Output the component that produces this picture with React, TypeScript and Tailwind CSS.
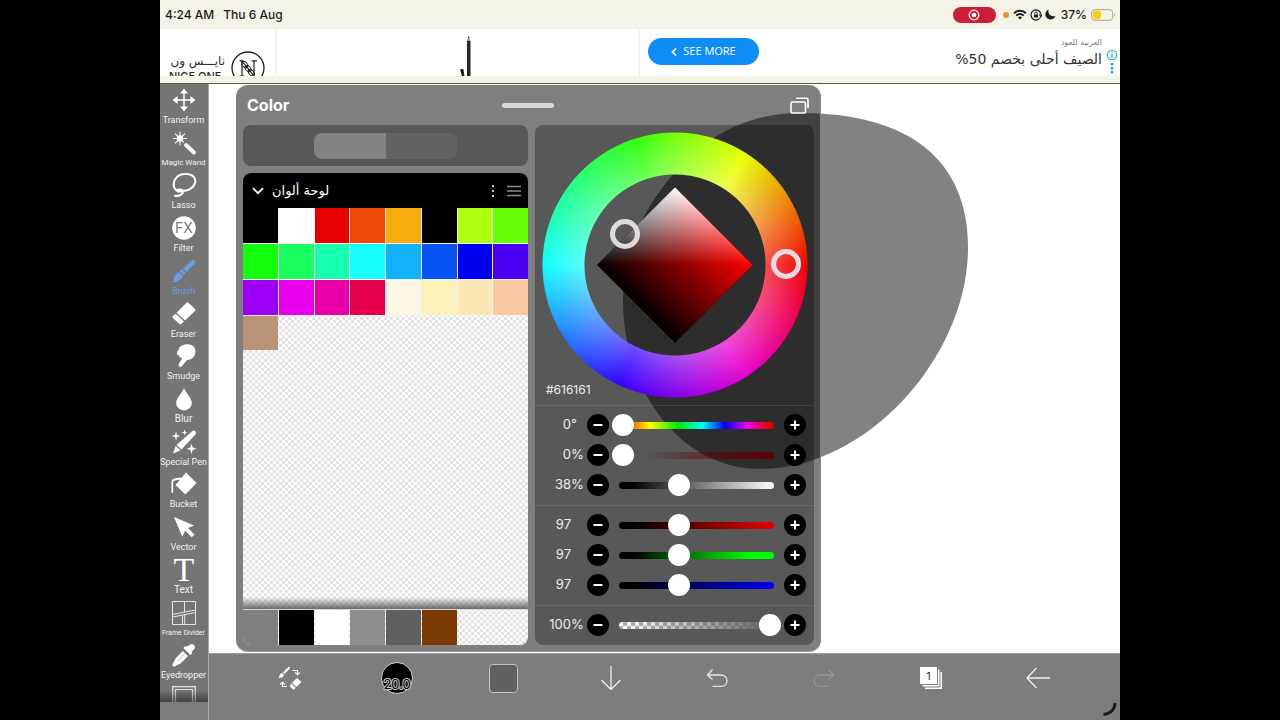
import { useState, type ReactNode } from 'react';

type Tool = { name: string; size: string; icon: ReactNode };

const CHECKER = 'bg-[repeating-conic-gradient(#e2e2e2_0_25%,#ffffff_0_50%)] bg-[length:6px_6px]';

const tools: Tool[] = [
  {
    name: 'Transform',
    size: 'text-[9px]',
    icon: (
      <g fill="white">
        <path d="M12 4v16M4 12h16" stroke="white" strokeWidth="1.5" />
        <path d="M12 .5l4 5H8zM12 23.500l4-5H8zM.5 12l5-4v8zM23.500 12l-5-4v8z" />
      </g>
    ),
  },
  {
    name: 'Magic Wand',
    size: 'text-[8px]',
    icon: (
      <g stroke="white" strokeLinecap="round">
        <path d="M14 14l8 7.500" strokeWidth="3.800" />
        <path
          d="M8 1v4M8 10v4M1.500 7.500h4M10.500 7.500h4M3.300 2.800l2.700 2.700M12.700 2.800L10 5.500M3.300 12.200L6 9.500M10 9.500l1.500 1.500"
          strokeWidth="1.100"
        />
        <circle cx="8" cy="7.500" r="2.800" fill="white" />
      </g>
    ),
  },
  {
    name: 'Lasso',
    size: 'text-[9px]',
    icon: (
      <g fill="none" stroke="white" strokeWidth="2" strokeLinecap="round">
        <path d="M4 17C1 14 .5 8.500 4.500 4.500c4-4.300 13-4.500 17-.9 3.500 3.800 1.500 10-4 12.700-3 1.400-6 1.700-8.500 1.200" />
        <path d="M9 17.500c2 .5 3 3-.5 4.500-2 .9-4 1-5.500.8" />
        <ellipse cx="7.500" cy="17.500" rx="3.600" ry="2" fill="white" stroke="none" />
      </g>
    ),
  },
  {
    name: 'Filter',
    size: 'text-[9px]',
    icon: (
      <g>
        <circle cx="12" cy="12" r="11.800" fill="white" />
        <text x="12" y="17" textAnchor="middle" fontSize="14" fill="#777777" className="font-['Inter',sans-serif]">
          FX
        </text>
      </g>
    ),
  },
  {
    name: 'Brush',
    size: 'text-[9px]',
    icon: (
      <g fill="#6b9ce8">
        <path d="M20 1.500c1.500-1.300 4.300 1 3 2.900L14.500 13 10.800 9.500z" />
        <path d="M9.800 10.300l3.900 3.700-2.200 2.300-4-3.700z" />
        <path d="M6.700 13.300l4 3.800c-.5 3-5.200 6-10.200 6.400 1.200-1 1.300-2.700 1.700-5 .5-2.800 2.200-4.800 4.500-5.200z" />
      </g>
    ),
  },
  {
    name: 'Eraser',
    size: 'text-[9px]',
    icon: (
      <g fill="white">
        <path d="M14.500 .8c.7-.7 1.300-.7 2 0l6.500 6.100c.7.7.7 1.300 0 2L13 18.500 4.600 10.700z" />
        <path d="M3.700 11.700l8.300 7.800-2.600 2.500c-.7.600-1.300.6-2 0L.9 15.900c-.7-.7-.7-1.300 0-2z" />
      </g>
    ),
  },
  {
    name: 'Smudge',
    size: 'text-[9px]',
    icon: (
      <path
        d="M6.500 6C7 2.500 11 .3 15.500.3c5 0 8 3.200 8 7 0 5-3.500 8.700-8.500 8.700l-4.800 6c-1.700 2-4.700.4-3.300-2.200l3.600-6c-1.500.5-3.300-.3-3.400-2.300-1.600-.2-2.400-1.700-2-3 .1-1.200.7-2 1.400-2.500z"
        fill="white"
      />
    ),
  },
  {
    name: 'Blur',
    size: 'text-[10px]',
    icon: <path d="M12 1c2.500 6 7.800 10 7.800 15.200a7.800 7.300 0 01-15.600 0C4.200 11 9.500 7 12 1z" fill="white" />,
  },
  {
    name: 'Special Pen',
    size: 'text-[9px]',
    icon: (
      <g fill="white">
        <path d="M20.500 1c1.700-1.500 4.600 1.300 3.100 3.300L9.500 19.500l-5-4.500zM3.700 16l4.800 4.300L1 23.500z" />
        <path d="M4 1.500l1 3.600 3.500 1-3.500 1-1 3.600-1-3.600-3.500-1 3.500-1zM12.500-.5l.7 2.300 2.300.7-2.300.7-.7 2.300-.7-2.300L9.500 2.500l2.300-.7zM19.500 13.500l1.200 4 3.800 1.200-3.800 1.200-1.200 4-1.200-4-3.800-1.200 3.800-1.200z" />
      </g>
    ),
  },
  {
    name: 'Bucket',
    size: 'text-[9px]',
    icon: (
      <g>
        <path d="M14 .5L24.500 11 13.500 22.500 3.500 13z" fill="white" />
        <path d="M11 6.500C6 7 .5 6.500 .3 9.500V20" fill="none" stroke="white" strokeWidth="1.800" strokeLinecap="round" />
      </g>
    ),
  },
  {
    name: 'Vector',
    size: 'text-[9px]',
    icon: <path d="M2 2l20 8.500-6 2.500 6.500 6.800-2.800 2.500-6.500-6.500-3 5.700z" fill="white" />,
  },
  {
    name: 'Text',
    size: 'text-[10px]',
    icon: (
      <text x="12" y="23" textAnchor="middle" fontSize="34" fill="white" className="font-['Liberation_Serif',serif]">
        T
      </text>
    ),
  },
  {
    name: 'Frame Divider',
    size: 'text-[7px]',
    icon: (
      <g fill="none" stroke="#e6e6e6" strokeWidth="1">
        <path d="M.5.5h23v23H.5zM.5 13.500l23-4.500M.5 16l23-4.500M12.500.5v10.600M10.500 14v9.500M12.700 13.600v9.900" />
      </g>
    ),
  },
  {
    name: 'Eyedropper',
    size: 'text-[9px]',
    icon: (
      <g>
        <path
          d="M18 1.700c2.500-2.300 6.500 1.400 4.300 4.300l-2.800 3 .9.900-2.100 2.100-7-7 2.100-2.100.9.900z"
          fill="white"
        />
        <path d="M10.800 8L3.500 15.500.5 21.500c-.3 1.300.7 2.200 2 2l6-3L16 13z" fill="white" />
        <path d="M13 10.500l-7.500 7.500" stroke="#b5b5b5" strokeWidth="1" />
      </g>
    ),
  },
];

const swatches = [
  ['Black', 'bg-black'],
  ['White', 'bg-white'],
  ['Red', 'bg-[#e80000]'],
  ['Vermilion', 'bg-[#ee4b08]'],
  ['Orange', 'bg-[#f6ac0b]'],
  ['Black', 'bg-black'],
  ['Lime', 'bg-[#aeff10]'],
  ['Chartreuse', 'bg-[#66ff08]'],
  ['Green', 'bg-[#14ff0c]'],
  ['Emerald', 'bg-[#19ff5b]'],
  ['Spring', 'bg-[#17ffae]'],
  ['Cyan', 'bg-[#18ffff]'],
  ['Sky', 'bg-[#12b2fb]'],
  ['Azure', 'bg-[#0853f4]'],
  ['Blue', 'bg-[#0000f0]'],
  ['Indigo', 'bg-[#4a00ee]'],
  ['Violet', 'bg-[#9b00f5]'],
  ['Magenta', 'bg-[#ea00ef]'],
  ['Fuchsia', 'bg-[#e800a6]'],
  ['Crimson', 'bg-[#e8004e]'],
  ['Ivory', 'bg-[#fdf6e3]'],
  ['Cream', 'bg-[#fbf1b9]'],
  ['Wheat', 'bg-[#fce6b4]'],
  ['Peach', 'bg-[#f9c7a1]'],
];

const recent = [
  ['Grey', 'bg-[#7f7f7f]'],
  ['Black', 'bg-black'],
  ['White', 'bg-white'],
  ['Silver', 'bg-[#8e8e8e]'],
  ['Dark grey', 'bg-[#606060]'],
  ['Brown', 'bg-[#7b3a02]'],
];

type Channel = { label: string; unit: string; value: number; max: number; track: string };

const groups: Channel[][] = [
  [
    {
      label: 'Hue',
      unit: '°',
      value: 0,
      max: 360,
      track: 'bg-[linear-gradient(to_right,#e00000,#ffff00_20%,#00e800_38%,#00ffff_54%,#0000f0_68%,#f000f0_83%,#e00000_97%)]',
    },
    { label: 'Saturation', unit: '%', value: 0, max: 100, track: 'bg-[linear-gradient(to_right,#61616100_15%,#600008)]' },
    { label: 'Brightness', unit: '%', value: 38, max: 100, track: 'bg-[linear-gradient(to_right,#000000_8%,#ffffff)]' },
  ],
  [
    { label: 'Red', unit: '', value: 97, max: 255, track: 'bg-[linear-gradient(to_right,#000000_8%,#e80000)]' },
    { label: 'Green', unit: '', value: 97, max: 255, track: 'bg-[linear-gradient(to_right,#000000_8%,#00ff00_85%)]' },
    { label: 'Blue', unit: '', value: 97, max: 255, track: 'bg-[linear-gradient(to_right,#000000_8%,#0000f0)]' },
  ],
  [
    {
      label: 'Opacity',
      unit: '%',
      value: 100,
      max: 100,
      track:
        'bg-[linear-gradient(to_right,#61616100,#616161),repeating-conic-gradient(#b4b4b4_0_25%,#ffffff_0_50%)] bg-[length:100%_100%,8px_8px]',
    },
  ],
];

function Slider({ channel }: { channel: Channel }) {
  const [value, setValue] = useState(channel.value);
  const round = 'flex size-[22px] shrink-0 items-center justify-center rounded-full bg-black text-white';
  return (
    <div className="flex h-[30px] items-center pr-2 text-[13px] text-[#ececec]">
      <span className="w-9 text-right">{value}</span>
      <span className="w-[14px]">{channel.unit}</span>
      <button className={`${round} ml-0.5`} aria-label={`Decrease ${channel.label}`} onClick={() => setValue(Math.max(0, value - 1))}>
        <svg viewBox="0 0 22 22" className="size-[22px]" stroke="currentColor" strokeWidth="2">
          <path d="M6.500 11h9" />
        </svg>
      </button>
      <div className="mx-[3px] grid min-w-0 flex-1 items-center">
        <div className={`mx-[7px] h-[7px] rounded-full [grid-area:1/1] ${channel.track}`} />
        <input
          type="range"
          aria-label={channel.label}
          min={0}
          max={channel.max}
          value={value}
          onChange={(e) => setValue(Number(e.target.value))}
          className="z-10 h-[22px] w-full appearance-none bg-transparent [grid-area:1/1] [&::-webkit-slider-thumb]:size-[22px] [&::-webkit-slider-thumb]:appearance-none [&::-webkit-slider-thumb]:rounded-full [&::-webkit-slider-thumb]:bg-white"
        />
      </div>
      <button className={round} aria-label={`Increase ${channel.label}`} onClick={() => setValue(Math.min(channel.max, value + 1))}>
        <svg viewBox="0 0 22 22" className="size-[22px]" stroke="currentColor" strokeWidth="2">
          <path d="M6.500 11h9M11 6.500v9" />
        </svg>
      </button>
    </div>
  );
}

function StatusBar() {
  return (
    <header className="flex h-[29px] items-center bg-[#f3f3e7] pl-[5px] pr-1 text-[12px] font-medium text-[#1c1c1a]">
      <span>4:24 AM</span>
      <span className="ml-[9px]">Thu 6 Aug</span>
      <span className="ml-auto flex h-4 w-[43px] items-center justify-center rounded-full bg-[#cb1f38]">
        <svg viewBox="0 0 12 12" className="size-3" fill="none" stroke="white">
          <circle cx="6" cy="6" r="4.800" strokeWidth="1.200" />
          <circle cx="6" cy="6" r="2.300" fill="white" stroke="none" />
        </svg>
      </span>
      <span className="ml-[7px] size-[6px] rounded-full bg-[#ee8a35]" />
      <svg viewBox="0 0 14 11" className="ml-1 h-[11px] w-[14px]" fill="none" stroke="#1c1c1a" strokeWidth="1.900">
        <path d="M1 4.200c3.500-3.300 8.500-3.300 12 0M3.200 6.600c2.300-2 5.300-2 7.600 0" />
        <path d="M7 10.500L4.900 8.300c1.200-1.100 3-1.100 4.200 0z" fill="#1c1c1a" stroke="none" />
      </svg>
      <svg viewBox="0 0 12 12" className="ml-[3px] size-3" fill="none" stroke="#1c1c1a" strokeWidth="1.200">
        <path d="M10.900 7A5 5 0 1110.900 5M9.300 5.300L11 7.200l1-2.300" />
        <rect x="3.900" y="5.400" width="4.200" height="3.200" rx=".5" fill="#1c1c1a" stroke="none" />
        <path d="M4.700 5.500V4.300a1.300 1.300 0 012.600 0v1.200" strokeWidth=".9" />
      </svg>
      <svg viewBox="0 0 11 11" className="ml-[3px] size-[11px]" fill="#1c1c1a">
        <path d="M3.600.5C2.500 4.500 5.500 8 10.500 7.200 8.500 11 3.500 11.500 1.300 8.300-.6 5.500.6 1.800 3.600.5z" />
      </svg>
      <span className="ml-[5px]">37%</span>
      <svg viewBox="0 0 25 12" className="ml-1 h-3 w-[25px]" fill="none">
        <rect x=".7" y=".7" width="21" height="10.600" rx="3.200" stroke="#a6a69c" />
        <rect x="2" y="2" width="8" height="8" rx="2" fill="#fbd20a" />
        <path d="M23.200 4.200c1.300.6 1.300 3 0 3.600z" fill="#a6a69c" />
      </svg>
    </header>
  );
}

function AdBanner() {
  return (
    <section aria-label="Advertisement" className="border-b border-[#5a5a55] bg-[#f3f3e7] pb-[7px]">
      <div className="flex h-[47px] overflow-hidden bg-white">
        <div className="flex w-[117px] shrink-0 items-start border-r-2 border-[#f3f3f3] pl-[9px] pt-[22px]">
          <div className="w-[56px] shrink-0 text-[#2c2c2c]">
            <p dir="rtl" className="whitespace-nowrap text-[12px] leading-5 font-['DejaVu_Sans',sans-serif]">
              نايـــس ون
            </p>
            <p className="whitespace-nowrap text-[11px] font-medium leading-[10px]">NICE ONE</p>
          </div>
          <svg viewBox="0 0 34 34" className="ml-[6px] size-[34px] shrink-0" fill="none" stroke="#222222">
            <circle cx="17" cy="17" r="16" strokeWidth="1.300" />
            <path d="M11 25V10l12 15V10M8.500 9.800h4M8.500 25h5M20.500 9.800H26" strokeWidth="1.200" />
            <ellipse cx="13.800" cy="13.500" rx="3.600" ry="2.400" transform="rotate(50 13.800 13.500)" />
            <ellipse cx="17" cy="17.500" rx="3.600" ry="2.400" transform="rotate(50 17 17.500)" />
            <ellipse cx="20.200" cy="21.500" rx="3.600" ry="2.400" transform="rotate(50 20.200 21.500)" />
          </svg>
        </div>
        <div className="flex flex-1 justify-center border-r border-[#ececec] pt-[7px]">
          <svg viewBox="0 0 14 40" className="ml-4 h-10 w-[14px]">
            <path d="M8 5L9.700 0l1.800 5z" fill="#c58a78" />
            <path d="M9 2L9.700 0l.8 2z" fill="#222222" />
            <path d="M8 5h3.500v35H8z" fill="#262626" />
            <path d="M1 33.500l3.300-.8 1.200 7.300H3z" fill="#1c1c1c" />
          </svg>
        </div>
        <div className="flex w-1/2 items-start pl-2 pr-[2px]">
          <a
            href="#offer"
            className="mt-[9px] flex h-[27px] w-[111px] items-center justify-center rounded-full bg-[#0f8df6] text-[11px] text-white font-['Open_Sans',sans-serif]"
          >
            <svg viewBox="0 0 6 8" className="mr-[6px] h-2 w-[6px]" fill="none" stroke="currentColor" strokeWidth="1.700">
              <path d="M5 .7L1.500 4 5 7.300" />
            </svg>
            SEE MORE
          </a>
          <div dir="rtl" className="ml-auto whitespace-nowrap pt-2 font-['DejaVu_Sans',sans-serif]">
            <p className="text-[8px] leading-3 text-[#777777]">العربية للعود</p>
            <p className="text-[14px] leading-5 text-[#333333]">الصيف أحلى بخصم 50%</p>
          </div>
          <svg viewBox="0 0 12 26" className="ml-1 mt-5 h-[26px] w-3" fill="none" stroke="#26b3b8">
            <circle cx="6" cy="6" r="4.800" strokeWidth="1.100" />
            <path d="M6 5v4M6 2.800v1.200" strokeWidth="1.300" />
            <path d="M6 14v2.600M6 18v2.600M6 22v2.600" strokeWidth="2.600" />
          </svg>
        </div>
      </div>
    </section>
  );
}

function ToolRail() {
  return (
    <aside className="flex w-[49px] shrink-0 flex-col border-r border-[#a5a5a5] bg-[#7d7d7d]">
      <nav aria-label="Tools" className="relative mb-[18px] flex flex-1 flex-col overflow-hidden bg-[#757575] font-['Roboto',sans-serif]">
        {tools.map((tool) => (
          <button
            key={tool.name}
            className={`flex min-h-[42px] grow basis-0 flex-col items-center pr-px pt-1 ${tool.name === 'Brush' ? 'text-[#6b9ce8]' : 'text-[#f2f2f2]'}`}
          >
            <svg viewBox="0 0 24 24" className="size-6 shrink-0 overflow-visible">
              {tool.icon}
            </svg>
            <span className={`mt-0.5 whitespace-nowrap leading-3 ${tool.size}`}>{tool.name}</span>
          </button>
        ))}
        <button aria-label="Canvas" className="flex h-5 justify-center overflow-hidden pt-1">
          <svg viewBox="0 0 24 24" className="size-6 shrink-0" fill="none" stroke="#e6e6e6">
            <path d="M.7.700h22.600v22.600H.7zM3.500 3.500h17v17h-17z" strokeWidth="1.200" />
          </svg>
        </button>
        <div className="pointer-events-none absolute inset-x-0 bottom-0 h-3 bg-gradient-to-t from-black/45 to-transparent" />
      </nav>
    </aside>
  );
}

function ColorWheel() {
  return (
    <div className="relative flex h-[280px] justify-center pt-[7px]">
      <div className="relative flex size-[266px] items-center justify-center">
        <div className="absolute inset-0 bg-[radial-gradient(closest-side,rgba(255,255,255,0.3)_68%,transparent_100%),conic-gradient(from_90deg,#f00000,#e800d0_16%,#3000ff_32%,#10ffff_50%,#30ff10_70%,#e8ff00_84%,#f00000)] [mask-image:radial-gradient(circle,transparent_90px,black_91px,black_132px,transparent_133px)]" />
        <div className="size-[110px] rotate-45 bg-[linear-gradient(to_top_left,#000000_50%,#00ffff),linear-gradient(to_top,#000000,#ff0000)] bg-blend-screen" />
        <span className="absolute left-[68px] top-[87px] size-[30px] rounded-full border-[5px] border-[#dcdadc]" />
        <span className="absolute left-[229px] top-[117px] size-[30px] rounded-full border-[5px] border-[#ecdcdf]" />
      </div>
      <output className="absolute bottom-[7px] left-[11px] text-[12px] leading-4 text-[#ececec]">#616161</output>
    </div>
  );
}

function ColorPanel() {
  return (
    <section
      aria-label="Color"
      className="absolute left-[27px] top-px w-[585px] rounded-xl border-b border-r border-b-[#9c9c9c] border-r-[#858585] bg-black/50 pb-[6px] pl-[7px] pr-[6px]"
    >
      <div className="grid h-10 grid-cols-3 items-center pl-1 pr-[5px]">
        <h1 className="text-[16px] font-bold text-white">Color</h1>
        <span className="h-[5px] w-[52px] justify-self-center rounded-full bg-[#d8d8d8]" />
        <button aria-label="Detach window" className="justify-self-end">
          <svg viewBox="0 0 19 17" className="h-[17px] w-[19px]" fill="none" stroke="white" strokeWidth="1.600">
            <rect x="1" y="5" width="14.500" height="11" rx="1.200" />
            <path d="M6 1.200h10.500a1.500 1.500 0 011.500 1.500V11" />
          </svg>
        </button>
      </div>
      <div className="flex gap-[7px]">
        <div className="flex w-[285px] flex-col gap-[7px]">
          <div className="flex h-[41px] items-center justify-center rounded-lg bg-black/30">
            <div className="flex h-[26px] w-1/2 overflow-hidden rounded-lg">
              <button aria-label="Palette view" className="flex-1 bg-[#838383]" />
              <button aria-label="History view" className="flex-1 bg-[#636363]" />
            </div>
          </div>
          <div className={`flex flex-1 flex-col overflow-hidden rounded-lg ${CHECKER}`}>
            <div className="flex h-[35px] shrink-0 items-center bg-black pl-[9px] pr-[7px] text-white">
              <svg viewBox="0 0 12 8" className="h-2 w-3" fill="none" stroke="white" strokeWidth="1.800">
                <path d="M1 1.200l5 5 5-5" />
              </svg>
              <h2 dir="rtl" className="ml-2 text-[13px] font-['DejaVu_Sans',sans-serif]">
                لوحة ألوان
              </h2>
              <button aria-label="Palette options" className="ml-auto">
                <svg viewBox="0 0 4 14" className="h-[14px] w-1" fill="white">
                  <circle cx="2" cy="2" r="1.100" />
                  <circle cx="2" cy="7" r="1.100" />
                  <circle cx="2" cy="12" r="1.100" />
                </svg>
              </button>
              <button aria-label="Reorder palettes" className="ml-3">
                <svg viewBox="0 0 14 12" className="h-3 w-[14px]" stroke="#8c8c8c" strokeWidth="1.600">
                  <path d="M0 1.500h14M0 6h14M0 10.500h14" />
                </svg>
              </button>
            </div>
            <div className="grid grid-cols-8 gap-px bg-[#f4f4f4] pb-px">
              {swatches.map(([name, color], i) => (
                <button key={i} aria-label={name} className={`h-[35px] ${color}`} />
              ))}
            </div>
            <div className="grid grid-cols-8 gap-px">
              <button aria-label="Tan" className="h-[34px] bg-[#b99378]" />
            </div>
            <div className="mt-auto h-3 bg-gradient-to-t from-[#6a6a6a] to-transparent" />
            <div className="grid grid-cols-8 gap-px border-t border-[#d8d8d8]">
              {recent.map(([name, color]) => (
                <button key={name} aria-label={`Recent ${name}`} className={`h-[35px] ${color}`} />
              ))}
            </div>
          </div>
        </div>
        <div className="flex-1 rounded-lg bg-black/30">
          <ColorWheel />
          {groups.map((group) => (
            <div key={group[0].label} className="border-t border-white/10 pb-[5px] pt-1">
              {group.map((channel) => (
                <Slider key={channel.label} channel={channel} />
              ))}
            </div>
          ))}
        </div>
      </div>
    </section>
  );
}

function BottomBar() {
  return (
    <footer className="relative h-[67px] shrink-0 border-t border-[#a0a0a0] bg-[#7d7d7d]">
      <div className="grid h-12 grid-cols-8 place-items-center pl-7 pr-[29px]">
        <button aria-label="Swap brush and eraser">
          <svg viewBox="0 0 24 24" className="size-6" fill="white">
            <path d="M10.300 1c1-.8 2.200.4 1.500 1.400L6.500 8 5 6.500zM4.300 7.200l1.600 1.600C6 10.500 3.500 12.500.5 12c1-.8.7-2 1.300-3.200.5-1 1.400-1.700 2.500-1.600z" />
            <path d="M19 12l4.500 4-5 5-4.500-4.200zM13.300 17.500l4.500 4.200-1.500 1.500c-.5.400-1 .4-1.500 0l-2.600-2.500c-.5-.5-.5-1 0-1.500z" />
            <path d="M14.500 4.500h5v4M17.200 6.500l2.300 2.300 2.300-2.300M9 20.500H4.500v-4M2 18.500l2.500-2.300L7 18.500" fill="none" stroke="white" strokeWidth="1.100" />
          </svg>
        </button>
        <button
          aria-label="Brush size"
          className="flex size-8 items-end justify-center rounded-full border border-[#d8d8d8] bg-black text-[13px] leading-[18px] text-black [-webkit-text-stroke:2px_#c8c8c8] [paint-order:stroke_fill]"
        >
          20.0
        </button>
        <button aria-label="Current color" className="size-[29px] rounded border border-[#c2c2c2] bg-[#616161]" />
        <button aria-label="Move down">
          <svg viewBox="0 0 24 24" className="size-6" fill="none" stroke="#f2f2f2" strokeWidth="1.300">
            <path d="M12 0v23.500M2.500 14L12 23.500l9.500-9.500" />
          </svg>
        </button>
        <button aria-label="Undo">
          <svg viewBox="0 0 24 24" className="size-6" fill="none" stroke="#e6e6e6" strokeWidth="1.300">
            <path d="M7.500 3.500L2.500 9l5 4.500M2.500 9h13.500c3.500 0 6 2.500 6 5.700 0 3.300-2.500 5.600-6 5.600H7.500" />
          </svg>
        </button>
        <button aria-label="Redo" disabled>
          <svg viewBox="0 0 24 24" className="size-6" fill="none" stroke="#959595" strokeWidth="1.300">
            <path d="M16.500 3.500L21.500 9l-5 4.500M21.500 9H8c-3.500 0-6 2.500-6 5.700 0 3.300 2.500 5.600 6 5.600h8.500" />
          </svg>
        </button>
        <button aria-label="Layers">
          <svg viewBox="0 0 24 24" className="size-6">
            <path d="M5.500 5.500h18v18h-18z" fill="white" stroke="#7d7d7d" strokeWidth="1" />
            <path d="M3 3h18v18H3z" fill="white" stroke="#7d7d7d" strokeWidth="1" />
            <path d="M.5.500h18v18H.5z" fill="white" stroke="#7d7d7d" strokeWidth="1" />
            <text x="9.500" y="13.500" textAnchor="middle" fontSize="11" fill="#333333">
              1
            </text>
          </svg>
        </button>
        <button aria-label="Back">
          <svg viewBox="0 0 24 24" className="size-6" fill="none" stroke="#f2f2f2" strokeWidth="1.300">
            <path d="M24 12H1M10.500 2L1 12l9.500 10" />
          </svg>
        </button>
      </div>
      <svg viewBox="0 0 16 16" className="absolute bottom-[3px] right-[3px] size-4" fill="none" stroke="#1a1a1a" strokeWidth="3">
        <path d="M14 2c0 6-4.500 11-11.500 11.500" />
      </svg>
    </footer>
  );
}

export default function App() {
  return (
    <div className="flex min-h-screen justify-center bg-black font-['Inter',sans-serif]">
      <div className="flex w-3/4 min-w-[700px] flex-col">
        <StatusBar />
        <AdBanner />
        <div className="flex flex-1">
          <ToolRail />
          <div className="flex min-w-0 flex-1 flex-col">
            <main className="relative min-h-[569px] flex-1 overflow-hidden bg-white">
              <svg viewBox="622 113 347 357" className="absolute left-[413px] top-[29px] h-[357px] w-[347px]">
                <path
                  d="M800 113C907 113 968 158 968 248 968 355 868 469 760 469 680 469 623 390 623 300 623 230 665 172 715 137 740 121 770 113 800 113z"
                  fill="#828282"
                />
              </svg>
              <ColorPanel />
            </main>
            <BottomBar />
          </div>
        </div>
      </div>
    </div>
  );
}
